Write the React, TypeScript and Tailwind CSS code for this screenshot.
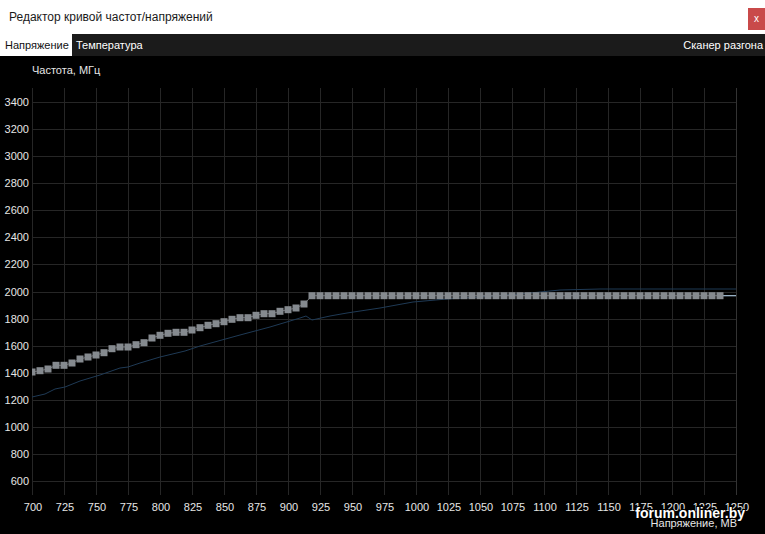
const FONT = { fontFamily: '"Liberation Sans", Arial, sans-serif' };

const PLOT_LEFT = 32;
const PLOT_RIGHT = 736;
const PLOT_TOP = 88;
const PLOT_BOTTOM = 495;

function yOf(f: number) {
  return PLOT_TOP + ((3500 - f) * 407) / 3000;
}

// user curve points, y in px, one every 6.25 mV (8 px)
const rising = [
  372, 370.7, 369, 365.3, 365.3, 363, 359, 357, 355, 352.7, 348.7, 347, 347,
  344.7, 342.7, 338, 335.3, 333.3, 332.3, 332.3, 330, 327.7, 325.3, 323.7,
  321.7, 319.3, 317.7, 317.7, 315.3, 313.7, 313.7, 311.3, 309.7, 308, 304,
];
const points: [number, number][] = [];
for (let i = 0; i <= 86; i++) {
  points.push([PLOT_LEFT + i * 8, i < rising.length ? rising[i] : 295.7]);
}

// default (stock) curve
const stock: [number, number][] = [
  [32, 397], [45, 394], [55, 389], [65, 387], [80, 381], [100, 375],
  [120, 368], [128, 367], [140, 363], [160, 357], [185, 351], [200, 346],
  [240, 335], [270, 327], [300, 318], [306, 316], [312, 320], [330, 316],
  [347, 313], [380, 308], [413, 302], [447, 299], [480, 297], [520, 294],
  [560, 290], [600, 289], [736, 289],
];

const xTicks = Array.from({ length: 23 }, (_, i) => 700 + i * 25);
const yTicks = Array.from({ length: 15 }, (_, i) => 600 + i * 200);

function Chart() {
  const last = points[points.length - 1];
  return (
    <svg
      width={765}
      height={478}
      viewBox="0 56 765 478"
      className="block"
      style={FONT}
    >
      <rect x={0} y={56} width={765} height={478} fill="#000" />
      <defs>
        <clipPath id="plot">
          <rect
            x={PLOT_LEFT}
            y={PLOT_TOP}
            width={PLOT_RIGHT - PLOT_LEFT}
            height={PLOT_BOTTOM - PLOT_TOP}
          />
        </clipPath>
      </defs>

      {/* grid */}
      {xTicks.map((v, i) => {
        const x = PLOT_LEFT + i * 32 + 0.5;
        return (
          <line
            key={v}
            x1={x}
            x2={x}
            y1={PLOT_TOP}
            y2={PLOT_BOTTOM}
            stroke={i === 22 ? "#333" : "#262626"}
            strokeWidth={1}
          />
        );
      })}
      {yTicks.map((f) => {
        const y = Math.round(yOf(f)) + 0.5;
        return (
          <line
            key={f}
            x1={PLOT_LEFT}
            x2={PLOT_RIGHT}
            y1={y}
            y2={y}
            stroke="#262626"
            strokeWidth={1}
          />
        );
      })}

      {/* labels */}
      <text x={32} y={74} fill="#e6e6e6" fontSize={11}>
        Частота, МГц
      </text>
      {yTicks.map((f) => (
        <text
          key={f}
          x={29}
          y={yOf(f) + 4}
          fill="#e6e6e6"
          fontSize={11}
          textAnchor="end"
        >
          {f}
        </text>
      ))}
      {xTicks.map((v, i) => (
        <text
          key={v}
          x={PLOT_LEFT + i * 32 + 1}
          y={511}
          fill="#e6e6e6"
          fontSize={11}
          textAnchor="middle"
        >
          {v}
        </text>
      ))}
      <text x={737} y={527} fill="#e6e6e6" fontSize={11} textAnchor="end">
        Напряжение, МВ
      </text>

      <g clipPath="url(#plot)">
        <polyline
          points={stock.map((p) => p.join(",")).join(" ")}
          fill="none"
          stroke="#1f3a55"
          strokeWidth={1}
        />
        <line
          x1={last[0]}
          x2={PLOT_RIGHT}
          y1={last[1]}
          y2={last[1]}
          stroke="#a9c3da"
          strokeWidth={1.2}
        />
        <polyline
          points={points.map((p) => p.join(",")).join(" ")}
          fill="none"
          stroke="#6e7276"
          strokeWidth={1}
        />
        {points.map(([x, y], i) => (
          <rect
            key={i}
            x={x - 3.5}
            y={y - 3.5}
            width={7}
            height={7}
            fill="#858a8f"
          />
        ))}
      </g>

      {/* watermark */}
      <text
        x={745}
        y={518}
        fill="#ffffff"
        fontSize={14}
        fontWeight="bold"
        textAnchor="end"
        stroke="#000"
        strokeWidth={2}
        paintOrder="stroke"
      >
        forum.onliner.by
      </text>
    </svg>
  );
}

export default function App() {
  return (
    <div
      className="w-[765px] h-[534px] overflow-hidden bg-black flex flex-col"
      style={FONT}
    >
      <div className="h-[34px] bg-white flex items-start justify-between shrink-0">
        <span className="pl-[9px] pt-[11px] text-[12px] text-[#1a1a1a] leading-none">
          Редактор кривой частот/напряжений
        </span>
        <div className="mt-[8px] w-[17px] h-[22px] bg-[#c94a4a] text-white text-[10px] flex items-center justify-center leading-none">
          x
        </div>
      </div>
      <div className="h-[22px] bg-[#1b1b1b] flex items-stretch text-[11px] leading-none shrink-0">
        <div className="bg-white text-[#111] px-[5px] flex items-center w-[72px]">
          Напряжение
        </div>
        <div className="text-white px-[4px] flex items-center">Температура</div>
        <div className="ml-auto text-white pr-[2px] flex items-center">
          Сканер разгона
        </div>
      </div>
      <Chart />
    </div>
  );
}
